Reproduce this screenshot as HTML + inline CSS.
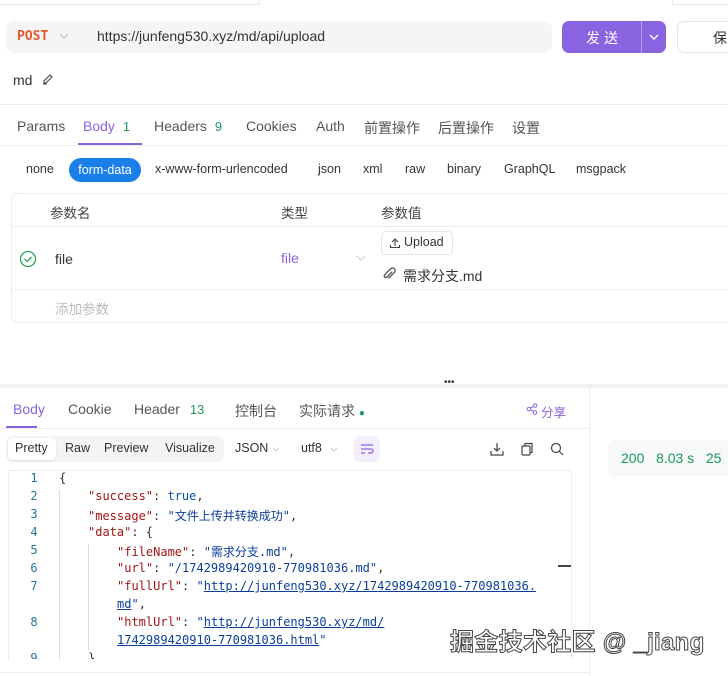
<!DOCTYPE html>
<html><head><meta charset="utf-8"><style>
*{margin:0;padding:0;box-sizing:border-box}
body{width:728px;height:676px;overflow:hidden;background:#fff;font-family:"Liberation Sans","Noto Sans CJK SC",sans-serif;color:#333;position:relative;font-size:14px}
.a{position:absolute;white-space:nowrap}
.mono{font-family:"DejaVu Sans Mono","Liberation Mono","Noto Sans CJK SC",monospace;font-size:12px}
.k{color:#a31515}.s{color:#0b3f9c}.b{color:#0451a5}.u{color:#0b3f9c;text-decoration:underline;text-decoration-color:#0b3f9c}
.ln{color:#237893;width:20px;text-align:center}
</style></head><body>
<div class="a" style="left:0;top:0;width:260px;height:5px;border-bottom:1px solid #e8e8e8;border-right:1px solid #e8e8e8"></div>
<div class="a" style="left:672px;top:0;width:56px;height:5px;border-bottom:1px solid #e8e8e8;border-left:1px solid #e8e8e8"></div>
<div class="a" style="left:6px;top:21px;width:546px;height:32px;background:#f5f5f7;border-radius:8px"></div>
<div class="a" style="left:17px;top:29px;color:#e8562a;font-weight:bold;font-family:'DejaVu Sans Mono',monospace;font-size:13px">POST</div>
<svg class="a" style="left:59px;top:32px" width="10" height="8"><path d="M1 2l4 4 4-4" fill="none" stroke="#bbb" stroke-width="1.1"/></svg>
<div class="a" style="left:97px;top:28px;font-size:14px;color:#333">https://junfeng530.xyz/md/api/upload</div>
<div class="a" style="left:562px;top:21px;width:104px;height:32px;background:#8a63e0;border-radius:7px"></div>
<div class="a" style="left:641px;top:21px;width:1px;height:32px;background:#b79bf0"></div>
<div class="a" style="left:586px;top:28px;color:#fff;font-size:14px;letter-spacing:4px">发送</div>
<svg class="a" style="left:648px;top:32px" width="12" height="10"><path d="M2 3l4 4 4-4" fill="none" stroke="#fff" stroke-width="1.4"/></svg>
<div class="a" style="left:677px;top:21px;width:60px;height:32px;border:1px solid #e5e5e5;border-radius:7px"></div>
<div class="a" style="left:713px;top:28px;font-size:14px">保</div>
<div class="a" style="left:13px;top:72px;font-size:14px">md</div>
<svg class="a" style="left:41px;top:72px" width="14" height="14"><path d="M2 12h4M3 9l6-6 2 2-6 6H3z" fill="none" stroke="#444" stroke-width="1.1"/></svg>
<div class="a" style="left:0;top:104px;width:728px;height:1px;background:#ececec"></div>
<div class="a" style="left:17px;top:118px;color:#555">Params</div>
<div class="a" style="left:83px;top:118px;color:#8a63e0">Body <span style="color:#1a9a5c;font-size:13px;margin-left:4px">1</span></div>
<div class="a" style="left:78px;top:143px;width:64px;height:2px;background:#8a63e0"></div>
<div class="a" style="left:154px;top:118px;color:#555">Headers <span style="color:#1a9a5c;font-size:13px;margin-left:4px">9</span></div>
<div class="a" style="left:246px;top:118px;color:#555">Cookies</div>
<div class="a" style="left:316px;top:118px;color:#555">Auth</div>
<div class="a" style="left:364px;top:118px;color:#555">前置操作</div>
<div class="a" style="left:438px;top:118px;color:#555">后置操作</div>
<div class="a" style="left:512px;top:118px;color:#555">设置</div>
<div class="a" style="left:0;top:145px;width:728px;height:1px;background:#ececec"></div>
<div class="a" style="left:26px;top:162px;font-size:12.5px">none</div>
<div class="a" style="left:69px;top:158px;width:72px;height:24px;background:#1a7fe8;border-radius:12px;color:#fff;font-size:12.5px;text-align:center;line-height:24px">form-data</div>
<div class="a" style="left:155px;top:162px;font-size:12.5px">x-www-form-urlencoded</div>
<div class="a" style="left:318px;top:162px;font-size:12.5px">json</div>
<div class="a" style="left:363px;top:162px;font-size:12.5px">xml</div>
<div class="a" style="left:405px;top:162px;font-size:12.5px">raw</div>
<div class="a" style="left:447px;top:162px;font-size:12.5px">binary</div>
<div class="a" style="left:504px;top:162px;font-size:12.5px">GraphQL</div>
<div class="a" style="left:576px;top:162px;font-size:12.5px">msgpack</div>
<div class="a" style="left:11px;top:193px;width:730px;height:130px;border:1px solid #ececec;border-radius:6px"></div>
<div class="a" style="left:50px;top:202px;font-size:13.5px;color:#444">参数名</div>
<div class="a" style="left:281px;top:202px;font-size:13.5px;color:#444">类型</div>
<div class="a" style="left:381px;top:202px;font-size:13.5px;color:#444">参数值</div>
<div class="a" style="left:11px;top:226px;width:720px;height:1px;background:#ececec"></div>
<svg class="a" style="left:19px;top:250px" width="18" height="18"><circle cx="9" cy="9" r="7.5" fill="none" stroke="#2aa25a" stroke-width="1.3"/><path d="M5.5 9l2.5 2.5 4.5-4.5" fill="none" stroke="#2aa25a" stroke-width="1.3"/></svg>
<div class="a" style="left:55px;top:251px">file</div>
<div class="a" style="left:281px;top:250px;color:#8a63e0">file</div>
<svg class="a" style="left:356px;top:255px" width="10" height="7"><path d="M1 1l4 4 4-4" fill="none" stroke="#ccc" stroke-width="1"/></svg>
<div class="a" style="left:381px;top:231px;width:72px;height:24px;border:1px solid #e5e5e5;border-radius:5px"></div>
<svg class="a" style="left:389px;top:237px" width="12" height="12"><path d="M6 9V2M3 5l3-3 3 3M1.5 8v2.5h9V8" fill="none" stroke="#444" stroke-width="1.1"/></svg>
<div class="a" style="left:404px;top:235px;font-size:12.5px">Upload</div>
<svg class="a" style="left:382px;top:267px" width="14" height="14"><path d="M10 5l-5 5a1.6 1.6 0 01-2.3-2.3l6-6a2.6 2.6 0 013.7 3.7l-6 6" fill="none" stroke="#555" stroke-width="1.3"/></svg>
<div class="a" style="left:403px;top:266px">需求分支.md</div>
<div class="a" style="left:11px;top:289px;width:720px;height:1px;background:#ececec"></div>
<div class="a" style="left:55px;top:298px;color:#bbb;font-size:13.5px">添加参数</div>
<div class="a" style="left:0;top:384px;width:728px;height:4px;background:#f2f2f2"></div>
<div class="a" style="left:444px;top:377px;font-size:10px;color:#333">•••</div>
<div class="a" style="left:589px;top:388px;width:1px;height:288px;background:#ececec"></div>
<div class="a" style="left:13px;top:401px;color:#8a63e0">Body</div>
<div class="a" style="left:6px;top:426px;width:31px;height:2px;background:#8a63e0"></div>
<div class="a" style="left:68px;top:401px;color:#555">Cookie</div>
<div class="a" style="left:134px;top:401px;color:#555">Header <span style="color:#1a9a5c;font-size:13px;margin-left:6px">13</span></div>
<div class="a" style="left:235px;top:401px;color:#555">控制台</div>
<div class="a" style="left:299px;top:401px;color:#555">实际请求 <span style="color:#1a9a5c;font-size:10px">●</span></div>
<svg class="a" style="left:526px;top:403px" width="12" height="12"><circle cx="3" cy="6" r="1.8" fill="none" stroke="#8a63e0"/><circle cx="9" cy="2.5" r="1.8" fill="none" stroke="#8a63e0"/><circle cx="9" cy="9.5" r="1.8" fill="none" stroke="#8a63e0"/><path d="M4.6 5.1l2.8-1.6M4.6 6.9l2.8 1.6" stroke="#8a63e0"/></svg>
<div class="a" style="left:541px;top:402px;color:#8a63e0;font-size:12.5px">分享</div>
<div class="a" style="left:0;top:428px;width:589px;height:1px;background:#ececec"></div>
<div class="a" style="left:6px;top:436px;width:218px;height:26px;background:#f4f4f6;border-radius:6px"></div>
<div class="a" style="left:8px;top:438px;width:48px;height:22px;background:#fff;border-radius:5px;box-shadow:0 1px 2px rgba(0,0,0,.1)"></div>
<div class="a" style="left:15px;top:441px;font-size:12.5px">Pretty</div>
<div class="a" style="left:65px;top:441px;font-size:12.5px">Raw</div>
<div class="a" style="left:104px;top:441px;font-size:12.5px">Preview</div>
<div class="a" style="left:165px;top:441px;font-size:12.5px">Visualize</div>
<div class="a" style="left:235px;top:441px;font-size:12.5px">JSON</div>
<svg class="a" style="left:272px;top:447px" width="8" height="6"><path d="M1 1l3 3 3-3" fill="none" stroke="#ccc"/></svg>
<div class="a" style="left:301px;top:441px;font-size:12.5px">utf8</div>
<svg class="a" style="left:330px;top:447px" width="8" height="6"><path d="M1 1l3 3 3-3" fill="none" stroke="#ccc"/></svg>
<div class="a" style="left:354px;top:436px;width:26px;height:26px;background:#f2eefc;border-radius:6px"></div>
<svg class="a" style="left:360px;top:443px" width="14" height="12"><path d="M1 2h12M1 6h10a2 2 0 010 4H8M1 10h4" fill="none" stroke="#8a63e0" stroke-width="1.2"/></svg>
<svg class="a" style="left:490px;top:442px" width="14" height="14"><path d="M7 1v8M4 6l3 3 3-3M1 9v4h12V9" fill="none" stroke="#444" stroke-width="1.2"/></svg>
<svg class="a" style="left:520px;top:442px" width="14" height="14"><rect x="2" y="4" width="8" height="9" rx="1" fill="none" stroke="#444" stroke-width="1.2"/><path d="M5 4V1.5h7v9h-2" fill="none" stroke="#444" stroke-width="1.2"/></svg>
<svg class="a" style="left:550px;top:442px" width="14" height="14"><circle cx="6" cy="6" r="4.5" fill="none" stroke="#444" stroke-width="1.2"/><path d="M9.5 9.5L13 13" stroke="#444" stroke-width="1.2"/></svg>
<div class="a" style="left:608px;top:440px;width:130px;height:36px;background:#f7f8f8;border-radius:6px"></div>
<div class="a" style="left:621px;top:450px;color:#1a9a5c;font-size:14px">200 &nbsp; 8.03 s &nbsp; 25</div>
<div class="a" style="left:8px;top:470px;width:564px;height:190px;border:1px solid #eee;border-bottom:none"></div>
<div class="a" style="left:0;top:672px;width:589px;height:1px;background:#eee"></div>
<div class="a" style="left:59px;top:490px;width:1px;height:170px;background:#ddd"></div>
<div class="a" style="left:88px;top:544px;width:1px;height:106px;background:#ddd"></div>
<div class="a" style="left:558px;top:565px;width:13px;height:2px;background:#444"></div>
<div class="mono">
<div class="a ln" style="left:24px;top:471px">1</div><div class="a" style="left:59px;top:471px">{</div>
<div class="a ln" style="left:24px;top:489px">2</div><div class="a" style="left:88px;top:489px"><span class="k">"success"</span>: <span class="b">true</span>,</div>
<div class="a ln" style="left:24px;top:507px">3</div><div class="a" style="left:88px;top:507px"><span class="k">"message"</span>: <span class="s">"文件上传并转换成功"</span>,</div>
<div class="a ln" style="left:24px;top:525px">4</div><div class="a" style="left:88px;top:525px"><span class="k">"data"</span>: {</div>
<div class="a ln" style="left:24px;top:543px">5</div><div class="a" style="left:117px;top:543px"><span class="k">"fileName"</span>: <span class="s">"需求分支.md"</span>,</div>
<div class="a ln" style="left:24px;top:561px">6</div><div class="a" style="left:117px;top:561px"><span class="k">"url"</span>: <span class="s">"/1742989420910-770981036.md"</span>,</div>
<div class="a ln" style="left:24px;top:579px">7</div><div class="a" style="left:117px;top:579px"><span class="k">"fullUrl"</span>: <span class="s">"</span><span class="u">http://junfeng530.xyz/1742989420910-770981036.</span></div>
<div class="a" style="left:117px;top:597px"><span class="u">md</span><span class="s">"</span>,</div>
<div class="a ln" style="left:24px;top:615px">8</div><div class="a" style="left:117px;top:615px"><span class="k">"htmlUrl"</span>: <span class="s">"</span><span class="u">http://junfeng530.xyz/md/</span></div>
<div class="a" style="left:117px;top:633px"><span class="u">1742989420910-770981036.html</span><span class="s">"</span></div>
<div class="a ln" style="left:24px;top:651px;height:8px;overflow:hidden">9</div><div class="a" style="left:88px;top:651px;height:8px;overflow:hidden">}</div>
</div>
<div class="a" style="left:450px;top:622px;font-size:24px;color:#fff;-webkit-text-stroke:1px #444;font-weight:bold;letter-spacing:0.3px">掘金技术社区 @ _jiang</div>
</body></html>
